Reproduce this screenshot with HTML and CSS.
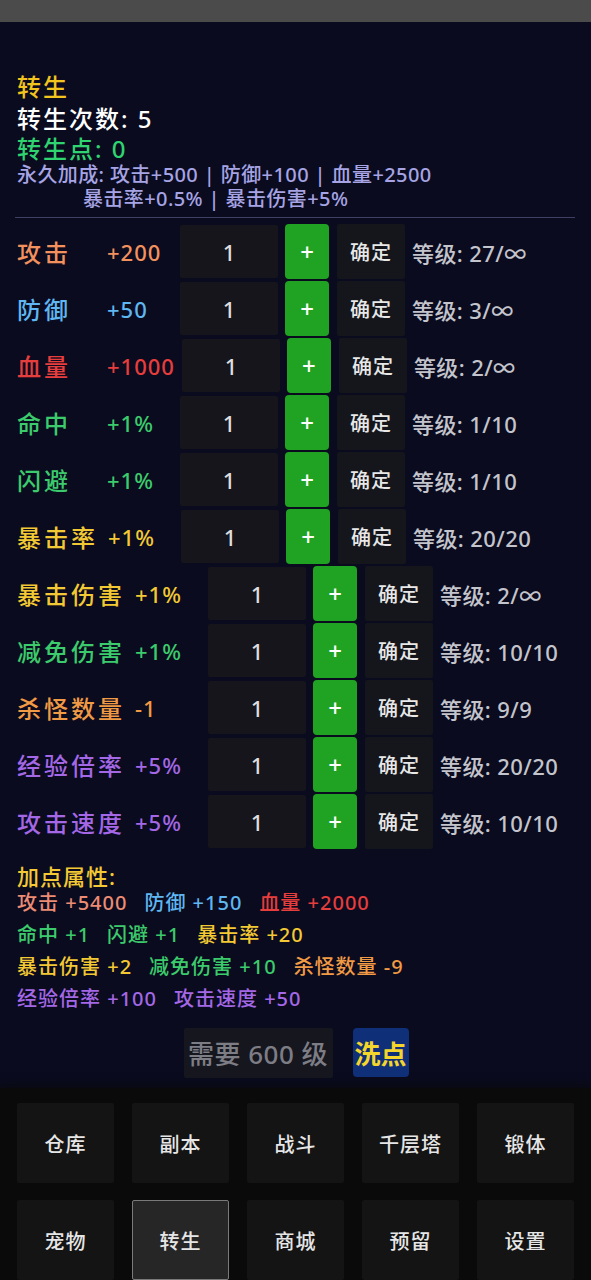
FILE: index.html
```html
<!DOCTYPE html>
<html lang="zh-CN">
  <head>
    <meta charset="UTF-8" />
    <meta name="viewport" content="width=device-width, initial-scale=1" />
    <title>转生</title>
    <link rel="stylesheet" href="styles.css">
  </head>
  <body>
    <div class="statusbar"></div>

    <div id="main">
      <div class="head-title">转生</div>
      <div class="head-count">转生次数: 5</div>
      <div class="head-points">转生点: 0</div>
      <div class="perma">永久加成: 攻击+500 | 防御+100 | 血量+2500</div>
      <div class="perma perma-indent">暴击率+0.5% | 暴击伤害+5%</div>
      <div class="divider"></div>

      <div id="stat-list">
        <div class="stat c-atk">
          <span class="stat-name">攻击</span><span class="stat-gain">+200</span>
          <input class="stat-amount" type="text" value="1" />
          <button class="btn-plus">+</button>
          <button class="btn-ok">确定</button>
          <span class="stat-level">等级: 27/∞</span>
        </div>
        <div class="stat c-def">
          <span class="stat-name">防御</span><span class="stat-gain">+50</span>
          <input class="stat-amount" type="text" value="1" />
          <button class="btn-plus">+</button>
          <button class="btn-ok">确定</button>
          <span class="stat-level">等级: 3/∞</span>
        </div>
        <div class="stat c-hp">
          <span class="stat-name">血量</span><span class="stat-gain">+1000</span>
          <input class="stat-amount" type="text" value="1" />
          <button class="btn-plus">+</button>
          <button class="btn-ok">确定</button>
          <span class="stat-level">等级: 2/∞</span>
        </div>
        <div class="stat c-hit">
          <span class="stat-name">命中</span><span class="stat-gain">+1%</span>
          <input class="stat-amount" type="text" value="1" />
          <button class="btn-plus">+</button>
          <button class="btn-ok">确定</button>
          <span class="stat-level">等级: 1/10</span>
        </div>
        <div class="stat c-hit">
          <span class="stat-name">闪避</span><span class="stat-gain">+1%</span>
          <input class="stat-amount" type="text" value="1" />
          <button class="btn-plus">+</button>
          <button class="btn-ok">确定</button>
          <span class="stat-level">等级: 1/10</span>
        </div>
        <div class="stat c-crit">
          <span class="stat-name">暴击率</span><span class="stat-gain">+1%</span>
          <input class="stat-amount" type="text" value="1" />
          <button class="btn-plus">+</button>
          <button class="btn-ok">确定</button>
          <span class="stat-level">等级: 20/20</span>
        </div>
        <div class="stat c-crit">
          <span class="stat-name">暴击伤害</span><span class="stat-gain">+1%</span>
          <input class="stat-amount" type="text" value="1" />
          <button class="btn-plus">+</button>
          <button class="btn-ok">确定</button>
          <span class="stat-level">等级: 2/∞</span>
        </div>
        <div class="stat c-hit">
          <span class="stat-name">减免伤害</span><span class="stat-gain">+1%</span>
          <input class="stat-amount" type="text" value="1" />
          <button class="btn-plus">+</button>
          <button class="btn-ok">确定</button>
          <span class="stat-level">等级: 10/10</span>
        </div>
        <div class="stat c-kill">
          <span class="stat-name">杀怪数量</span><span class="stat-gain">-1</span>
          <input class="stat-amount" type="text" value="1" />
          <button class="btn-plus">+</button>
          <button class="btn-ok">确定</button>
          <span class="stat-level">等级: 9/9</span>
        </div>
        <div class="stat c-exp">
          <span class="stat-name">经验倍率</span><span class="stat-gain">+5%</span>
          <input class="stat-amount" type="text" value="1" />
          <button class="btn-plus">+</button>
          <button class="btn-ok">确定</button>
          <span class="stat-level">等级: 20/20</span>
        </div>
        <div class="stat c-exp">
          <span class="stat-name">攻击速度</span><span class="stat-gain">+5%</span>
          <input class="stat-amount" type="text" value="1" />
          <button class="btn-plus">+</button>
          <button class="btn-ok">确定</button>
          <span class="stat-level">等级: 10/10</span>
        </div>
      </div>

      <div class="alloc-title">加点属性:</div>
      <div class="alloc">
        <div class="alloc-line">
          <span class="c-atk2">攻击 +5400</span>
          <span class="c-def">防御 +150</span>
          <span class="c-hp">血量 +2000</span>
        </div>
        <div class="alloc-line">
          <span class="c-hit">命中 +1</span>
          <span class="c-hit">闪避 +1</span>
          <span class="c-crit">暴击率 +20</span>
        </div>
        <div class="alloc-line">
          <span class="c-crit">暴击伤害 +2</span>
          <span class="c-hit">减免伤害 +10</span>
          <span class="c-kill">杀怪数量 -9</span>
        </div>
        <div class="alloc-line">
          <span class="c-exp">经验倍率 +100</span>
          <span class="c-exp">攻击速度 +50</span>
        </div>
      </div>

      <div class="reset-row">
        <button class="btn-need" disabled>需要 600 级</button>
        <button class="btn-reset">洗点</button>
      </div>
    </div>

    <nav id="menu">
      <button class="menu-btn">仓库</button>
      <button class="menu-btn">副本</button>
      <button class="menu-btn">战斗</button>
      <button class="menu-btn">千层塔</button>
      <button class="menu-btn">锻体</button>
      <button class="menu-btn">宠物</button>
      <button class="menu-btn active">转生</button>
      <button class="menu-btn">商城</button>
      <button class="menu-btn">预留</button>
      <button class="menu-btn">设置</button>
    </nav>
  </body>
</html>
```

FILE: styles.css
```css
/* Base */
body {
  margin: 0;
  height: 1280px;
  overflow: hidden;
  background: #0a0b1e;
  color: #ffffff;
  font-family: "Noto Sans", "Noto Sans CJK SC", sans-serif;
  font-weight: 500;
}

button,
input {
  font-family: inherit;
  font-weight: inherit;
}

.statusbar {
  height: 22px;
  background: #4b4b4b;
}

#main {
  padding: 49px 16px 0 17px;
}

/* Header */
.head-title,
.head-count,
.head-points {
  font-size: 24px;
  line-height: 32px;
  letter-spacing: 2px;
}

.head-title {
  color: #f3c41d;
}

.head-points {
  line-height: 28px;
  color: #2fd470;
}

.perma {
  font-size: 20px;
  line-height: 24px;
  letter-spacing: 0.4px;
  color: #a6a4e4;
  white-space: nowrap;
}

.perma-indent {
  padding-left: 66px;
}

.divider {
  margin: 6px 0 0 -2px;
  border-top: 1px solid #3e3f62;
}

/* Stat rows */
#stat-list {
  margin-top: 6px;
}

.stat {
  display: flex;
  align-items: center;
  height: 55px;
  margin-bottom: 2px;
}

.stat-name {
  min-width: 80px;
  margin-right: 10px;
  font-size: 24px;
  letter-spacing: 3px;
  white-space: nowrap;
}

.stat-gain {
  min-width: 66px;
  margin-right: 7px;
  font-size: 22px;
  letter-spacing: 1px;
}

.stat-amount {
  width: 98px;
  height: 53px;
  margin-right: 7px;
  padding: 0;
  border: none;
  border-radius: 2px;
  background: #15151b;
  color: #dedede;
  font-size: 22px;
  text-align: center;
  box-sizing: border-box;
}

.btn-plus {
  width: 44px;
  height: 55px;
  margin-right: 8px;
  padding: 0;
  border: none;
  border-radius: 4px;
  background: #20a322;
  color: #ffffff;
  font-size: 24px;
}

.btn-ok {
  width: 68px;
  height: 55px;
  margin-right: 7px;
  padding: 0;
  border: none;
  border-radius: 2px;
  background: #15161b;
  color: #e8e8e8;
  font-size: 20px;
  letter-spacing: 1px;
}

.stat-level {
  font-size: 22px;
  letter-spacing: 0.4px;
  color: #c4c4cc;
  white-space: nowrap;
}

/* Colours */
.c-atk { color: #f2915e; }
.c-atk2 { color: #ec8c74; }
.c-def { color: #5fb6f0; }
.c-hp { color: #e63d3d; }
.c-hit { color: #3ccb6c; }
.c-crit { color: #f2c934; }
.c-kill { color: #f09a45; }
.c-exp { color: #a468e6; }

/* Allocated points */
.alloc-title {
  margin-top: 15px;
  font-size: 22px;
  line-height: 24px;
  letter-spacing: 1px;
  color: #f2c934;
}

.alloc {
  margin-top: -3px;
}

.alloc-line {
  display: flex;
  gap: 17px;
  height: 32px;
  align-items: center;
  font-size: 20px;
  letter-spacing: 1px;
  white-space: nowrap;
}

/* Reset buttons */
.reset-row {
  display: flex;
  justify-content: center;
  gap: 20px;
  margin-top: 15px;
}

.btn-need {
  width: 149px;
  height: 50px;
  padding: 0;
  border: none;
  border-radius: 2px;
  background: #16161e;
  color: #7d7d85;
  font-size: 26px;
  letter-spacing: 0.5px;
}

.btn-reset {
  width: 56px;
  height: 49px;
  padding: 0;
  border: none;
  border-radius: 4px;
  background: #0f2f78;
  color: #f4d52c;
  font-size: 26px;
  font-weight: 700;
}

/* Bottom menu */
#menu {
  display: grid;
  grid-template-columns: repeat(5, 1fr);
  gap: 17px 18px;
  margin-top: 10px;
  padding: 15px 17px;
  background: #0a0a0a;
  box-shadow: 0 -4px 8px rgba(10, 10, 10, 0.6);
}

.menu-btn {
  height: 80px;
  padding: 0;
  border: 1px solid transparent;
  border-radius: 2px;
  background: #141414;
  color: #e6e6e6;
  font-size: 20px;
  letter-spacing: 1px;
}

.menu-btn.active {
  background: #262626;
  border-color: #7a7a7a;
}
```
